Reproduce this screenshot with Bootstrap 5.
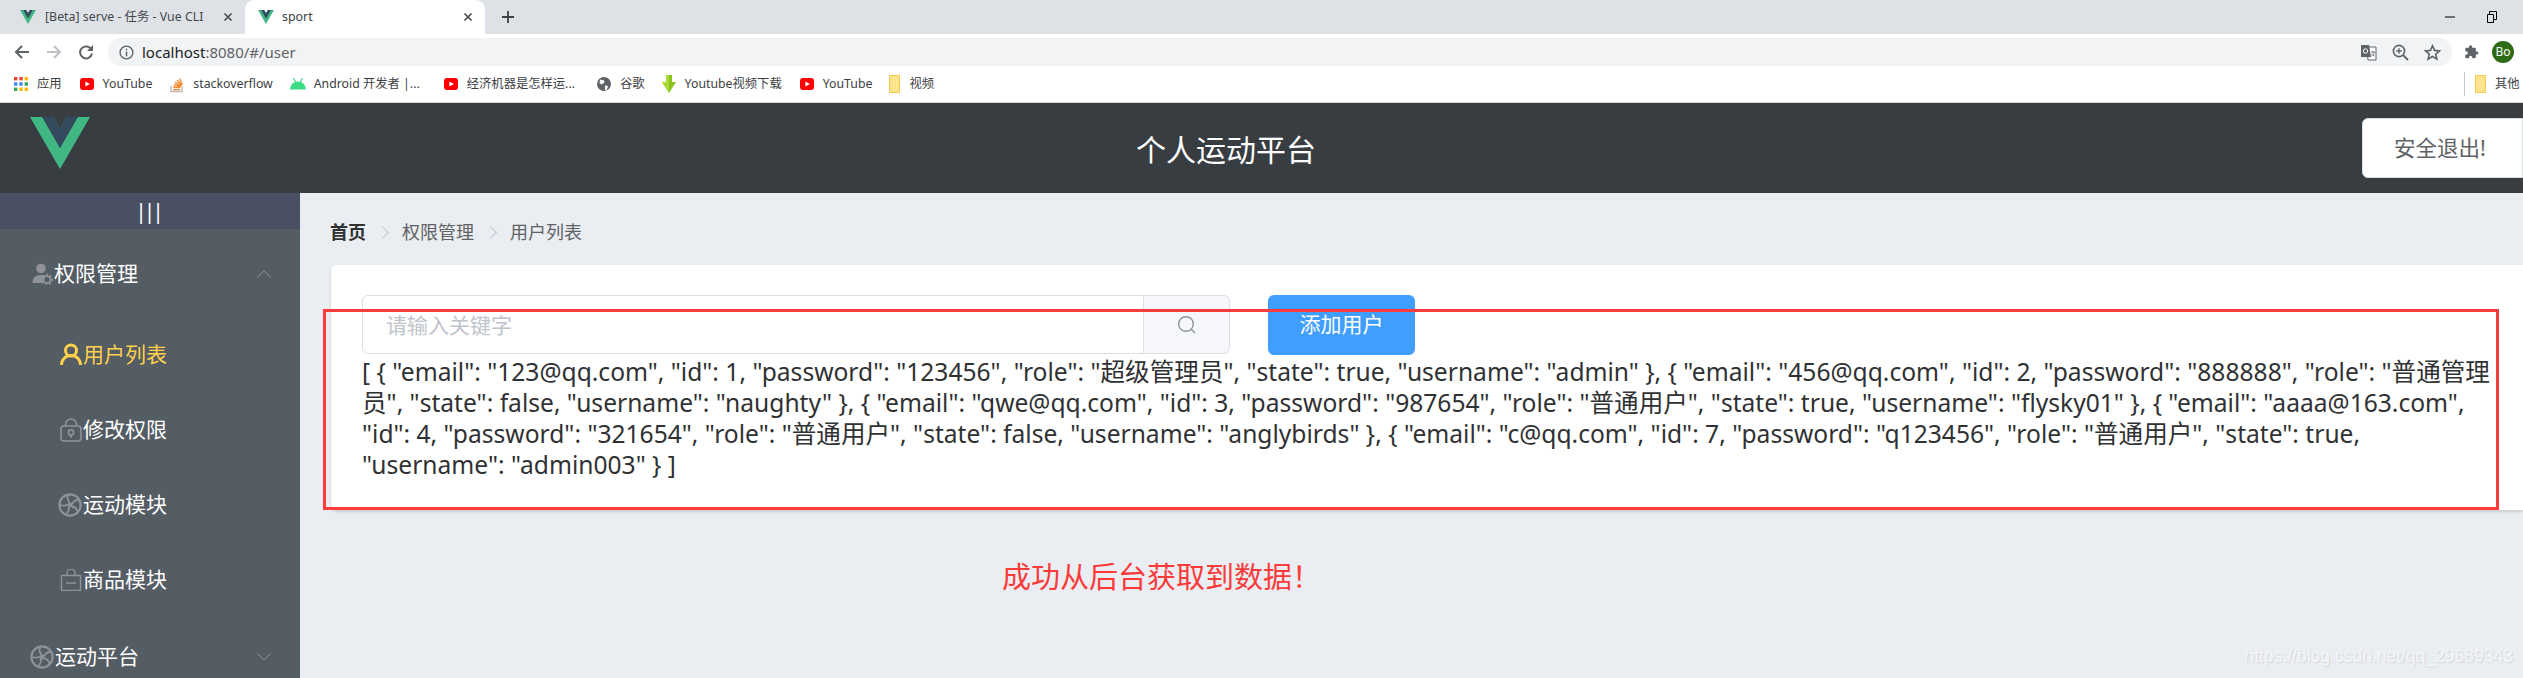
<!doctype html>
<html lang="zh">
<head>
<meta charset="utf-8">
<title>sport</title>
<link href="https://cdn.jsdelivr.net/npm/bootstrap@5.3.0/dist/css/bootstrap.min.css" rel="stylesheet">
<style>
html,body{height:678px;overflow:hidden}
body{font-family:"Noto Sans","Noto Sans CJK SC",sans-serif;background:#eaedf1;color:#303133;width:2523px}
svg{display:block;flex:none}
/* browser chrome */
.tabstrip{height:34px;background:#dee1e6;padding-left:16px}
.brtab{height:34px;font-size:12.4px;color:#45494e;white-space:nowrap}
.brtab.first{width:229px;padding-left:4px}
.brtab.active{width:240px;background:#fff;border-radius:9px 9px 0 0;padding-left:13px;color:#3c4043}
.tabname{flex:1;margin-left:8px;overflow:hidden}
.first .tabname{margin-left:9px}
.tabx{width:12px;margin-right:11px}
.newtab{margin-left:16px}
.winbtns{margin-left:auto;gap:32px;padding-right:26px}
.toolbar{height:32px;background:#fff;padding:4px 8px 0 14px}
.navs{gap:16px;width:94px}
.omni{height:28px;width:2344px;background:#f1f3f4;border-radius:14px;font-size:15px;color:#5f6368;padding:0 11px}
.omni b{font-weight:400;color:#202124}
.omni .urltxt{margin-left:8px}
.omni .rt{margin-left:auto;gap:15px}
.tool-r{margin-left:12px;gap:13px}
.avatar{width:22px;height:22px;border-radius:50%;background:#2e6b16;color:#fff;font-size:12px;line-height:22px;text-align:center}
.bmbar{height:37px;background:#fff;border-bottom:1px solid #d9dadc;padding:0 0 0 13px;font-size:12.3px;color:#3c4043;white-space:nowrap}
.bm{gap:8px;margin-right:17px}
.bm.w1{margin-right:23px}
.bm.w2{margin-right:21px}
.bm.tight{margin-right:16px}
.bm.other{margin-left:auto;margin-right:0;width:59px;border-left:1px solid #c9cbce;padding-left:10px;height:24px}
/* app */
.apphead{height:90px;background:#373d41}
.applogo{margin-left:30px;margin-top:14px}
.apptitle{flex:1;text-align:center;line-height:94px;font-size:30px;color:#fff}
.logout{margin-top:15px;height:60px;width:161px;background:#fff;border:1px solid #dcdfe6;border-radius:6px 0 0 6px;color:#606266;font-size:21.5px;padding:0 0 0 31px;text-align:left}
.appbody{height:485px}
.side{width:300px;background:#545c64;flex:none}
.sidebar-toggle{height:36px;background:#4a5064;color:#fff;font-size:21px;text-align:center;letter-spacing:-3px;line-height:36px;padding-right:4px}
.menuitem{height:75px;color:#fff;font-size:21px;padding-left:32px}
.menuitem.sub{padding-left:60px}
.menuitem.on{color:#ffd04b}
.menuitem svg.ic{margin-right:1px}
.menuitem svg.wheel{margin-left:-2px}
.chev{margin-left:auto;margin-right:29px}
.menulist{padding-top:7px}
.subs{padding-top:6px;padding-bottom:2px}
.content{flex:1;padding-left:31px;min-width:0}
.crumbs{height:72px;margin:0;font-size:18px;padding:5px 0 0;--bs-breadcrumb-margin-bottom:0;color:#606266}
.crumbs .breadcrumb-item{line-height:69px}
.crumbs .homecrumb{font-weight:700;color:#303133;margin-left:-1px}
.crumbs .breadcrumb-item+.breadcrumb-item{padding-left:36px;position:relative}
.crumbs .breadcrumb-item+.breadcrumb-item::before{content:"";position:absolute;left:12px;top:30px;width:9px;height:9px;border-top:1px solid #c0c4cc;border-right:1px solid #c0c4cc;transform:rotate(45deg);padding:0}
.panel{position:relative;background:#fff;border:0;border-radius:6px 0 0 6px;box-shadow:0 2px 3px rgba(0,0,0,.14);padding:30px 0 30px 31px}
.searchrow{height:60px;gap:38px}
.searchbox{width:868px;height:59px}
.searchbox .form-control{height:59px;font-size:21px;color:#606266;border:1px solid #dcdfe6;padding-left:23px;border-radius:6px 0 0 6px;background:#fff}
.searchbox .form-control::placeholder{color:#c0c4cc}
.searchbox .input-group-text{width:87px;justify-content:center;background:#f5f7fa;border:1px solid #dcdfe6;border-radius:0 6px 6px 0;padding:0}
.addbtn{width:147px;height:60px;background:#409eff;border:0;border-radius:6px;color:#fff;font-size:21px;padding:0}
.jsondump{margin:1px 0 0;font-size:24.6px;line-height:31px;white-space:nowrap;color:#303133}
.redbox{position:absolute;left:-8px;top:44px;width:2176px;height:201px;border:3px solid #ff3b3b;pointer-events:none}
.note{margin:47px 0 0 671px;color:#fb3a3a;font-size:29px;line-height:40px}
.wmark{position:absolute;right:10px;bottom:9px;color:#f5f6f8;font-size:17.5px;text-shadow:1px 1px 1px #d3d6dc;font-family:"Liberation Sans",sans-serif}
</style>
</head>
<body class="position-relative">

<div class="tabstrip d-flex align-items-center">
  <div class="brtab first d-flex align-items-center">
    <svg width="16" height="16" viewBox="0 0 261.76 226.69"><path fill="#41b883" d="M161.096.001l-30.225 52.351L100.647.001H-.005l130.877 226.688L261.749.001z"/><path fill="#34495e" d="M161.096.001l-30.225 52.351L100.647.001H52.346l78.526 136.01L209.398.001z"/></svg>
    <span class="tabname">[Beta] serve - 任务 - Vue CLI</span>
    <svg class="tabx" width="12" height="12" viewBox="0 0 12 12"><path d="M2.500 2.500l7 7m0-7l-7 7" stroke="#45494e" stroke-width="1.600"/></svg>
  </div>
  <div class="brtab active d-flex align-items-center">
    <svg width="16" height="16" viewBox="0 0 261.76 226.69"><path fill="#41b883" d="M161.096.001l-30.225 52.351L100.647.001H-.005l130.877 226.688L261.749.001z"/><path fill="#34495e" d="M161.096.001l-30.225 52.351L100.647.001H52.346l78.526 136.01L209.398.001z"/></svg>
    <span class="tabname">sport</span>
    <svg class="tabx" width="12" height="12" viewBox="0 0 12 12"><path d="M2.500 2.500l7 7m0-7l-7 7" stroke="#45494e" stroke-width="1.600"/></svg>
  </div>
  <svg class="newtab" width="14" height="14" viewBox="0 0 14 14"><path d="M7 1v12M1 7h12" stroke="#3c4043" stroke-width="1.800"/></svg>
  <div class="winbtns d-flex align-items-center">
    <svg width="10" height="10" viewBox="0 0 10 10"><path d="M0 5h10" stroke="#000"/></svg>
    <svg width="10" height="12" viewBox="0 0 10 12"><path d="M.5 3.500h6v8h-6zM2.500 3.500v-3h7v8h-3" fill="none" stroke="#000"/></svg>
  </div>
</div>

<div class="toolbar d-flex align-items-start">
  <div class="navs d-flex align-items-center h-100">
    <svg width="16" height="16" viewBox="0 0 16 16"><path d="M15 8H2M8 2L2 8l6 6" fill="none" stroke="#5f6368" stroke-width="2"/></svg>
    <svg width="16" height="16" viewBox="0 0 16 16"><path d="M1 8h13M8 2l6 6-6 6" fill="none" stroke="#bdc1c6" stroke-width="2"/></svg>
    <svg width="16" height="16" viewBox="0 0 16 16"><path d="M13.600 6A6 6 0 1 0 14 9.500" fill="none" stroke="#5f6368" stroke-width="2"/><path d="M15 1v6H9z" fill="#5f6368"/></svg>
  </div>
  <div class="omni d-flex align-items-center">
    <svg width="15" height="15" viewBox="0 0 15 15"><circle cx="7.500" cy="7.500" r="6.400" fill="none" stroke="#5f6368" stroke-width="1.400"/><path d="M7.500 6.600v4.600M7.500 3.800v1.500" stroke="#5f6368" stroke-width="1.500"/></svg>
    <span class="urltxt"><b>localhost</b>:8080/#/user</span>
    <div class="rt d-flex align-items-center">
      <svg width="17" height="17" viewBox="0 0 17 17"><path d="M7 3h9v13H8z" fill="#fff" stroke="#5f6368"/><path d="M1 1h8l2 12H1z" fill="#5f6368"/><path d="M11 8h4M13 7v1M14.500 8c-.5 2-2 3.500-3 4M11.600 9.500c.7 1.200 1.800 2.200 3 2.600" fill="none" stroke="#5f6368" stroke-width=".8"/><circle cx="5.500" cy="7" r="2.200" fill="none" stroke="#fff"/></svg>
      <svg width="17" height="17" viewBox="0 0 17 17"><circle cx="7" cy="7" r="5.600" fill="none" stroke="#5f6368" stroke-width="1.600"/><path d="M11 11l5 5" stroke="#5f6368" stroke-width="1.800"/><path d="M7 4.200v5.600M4.200 7h5.600" stroke="#5f6368" stroke-width="1.400"/></svg>
      <svg width="17" height="17" viewBox="0 0 17 17"><path d="M8.500 1.800l2 4.600 5 .5-3.800 3.300 1.200 4.900-4.400-2.600-4.400 2.600 1.200-4.900L1.500 6.900l5-.5z" fill="none" stroke="#5f6368" stroke-width="1.600"/></svg>
    </div>
  </div>
  <div class="tool-r d-flex align-items-center h-100">
    <svg width="15" height="16" viewBox="0 0 24 24"><path fill="#5f6368" d="M20.500 11H19V7a2 2 0 0 0-2-2h-4V3.500a2.500 2.500 0 0 0-5 0V5H4a2 2 0 0 0-2 2v3.800h1.500a2.700 2.700 0 0 1 0 5.400H2V20a2 2 0 0 0 2 2h3.800v-1.500a2.700 2.700 0 0 1 5.400 0V22H17a2 2 0 0 0 2-2v-4h1.500a2.500 2.500 0 0 0 0-5z"/></svg>
    <div class="avatar">Bo</div>
  </div>
</div>

<div class="bmbar d-flex align-items-center">
  <div class="bm d-flex align-items-center">
    <svg width="16" height="16" viewBox="0 0 16 16"><rect x="1" y="1" width="3.400" height="3.400" fill="#ea4335"/><rect x="6.300" y="1" width="3.400" height="3.400" fill="#ea4335"/><rect x="11.600" y="1" width="3.400" height="3.400" fill="#fbbc04"/><rect x="1" y="6.300" width="3.400" height="3.400" fill="#4285f4"/><rect x="6.300" y="6.300" width="3.400" height="3.400" fill="#4285f4"/><rect x="11.600" y="6.300" width="3.400" height="3.400" fill="#34a853"/><rect x="1" y="11.600" width="3.400" height="3.400" fill="#34a853"/><rect x="6.300" y="11.600" width="3.400" height="3.400" fill="#fbbc04"/><rect x="11.600" y="11.600" width="3.400" height="3.400" fill="#fbbc04"/></svg>
    <span>应用</span>
  </div>
  <div class="bm d-flex align-items-center">
    <svg width="16" height="16" viewBox="0 0 16 16"><rect x="1" y="2" width="14" height="12" rx="3" fill="#f00"/><path d="M6.300 5.400v5.200L11 8z" fill="#fff"/></svg>
    <span>YouTube</span>
  </div>
  <div class="bm d-flex align-items-center">
    <svg width="16" height="18" viewBox="0 0 16 18"><path d="M2 11v5.500h11V11" fill="none" stroke="#bcbbbb" stroke-width="1.400"/><path d="M4 14.600h7M4.200 12l7 .6M4.800 9.700l6.800 1.800M6 7.400l6 3.400M8 5.200l4.800 5M10.500 3.400l2.800 6.200" stroke="#f48024" stroke-width="1.300" fill="none"/></svg>
    <span>stackoverflow</span>
  </div>
  <div class="bm w1 d-flex align-items-center">
    <svg width="16" height="14" viewBox="0 0 16 14"><path d="M0 12.500a8 8 0 0 1 16 0z" fill="#3ddc84"/><path d="M3.500 1l2 4M12.500 1l-2 4" stroke="#3ddc84" stroke-width="1.200"/></svg>
    <span>Android 开发者 |...</span>
  </div>
  <div class="bm w2 d-flex align-items-center">
    <svg width="16" height="16" viewBox="0 0 16 16"><rect x="1" y="2" width="14" height="12" rx="3" fill="#f00"/><path d="M6.300 5.400v5.200L11 8z" fill="#fff"/></svg>
    <span>经济机器是怎样运...</span>
  </div>
  <div class="bm tight d-flex align-items-center">
    <svg width="16" height="16" viewBox="0 0 16 16"><circle cx="8" cy="8" r="7" fill="#5f6368"/><path d="M4 3.500l4 1 .5 2-3 2-2-1.500zM9 9.500l3 .5-1 3.500-2 1z" fill="#fff"/></svg>
    <span>谷歌</span>
  </div>
  <div class="bm d-flex align-items-center">
    <svg width="16" height="20" viewBox="0 0 16 20"><path d="M5 1h6v7h4l-7 11L1 8h4z" fill="#8bc31e"/><path d="M5 1h3v18L1 8h4z" fill="#a8d936"/></svg>
    <span>Youtube视频下载</span>
  </div>
  <div class="bm d-flex align-items-center">
    <svg width="16" height="16" viewBox="0 0 16 16"><rect x="1" y="2" width="14" height="12" rx="3" fill="#f00"/><path d="M6.300 5.400v5.200L11 8z" fill="#fff"/></svg>
    <span>YouTube</span>
  </div>
  <div class="bm d-flex align-items-center">
    <svg width="12" height="18" viewBox="0 0 12 18"><path d="M.5.5h10v17H.5z" fill="#fee48f" stroke="#f2c94c"/></svg>
    <span>视频</span>
  </div>
  <div class="bm other d-flex align-items-center">
    <svg width="12" height="18" viewBox="0 0 12 18"><path d="M.5.5h10v17H.5z" fill="#fee48f" stroke="#f2c94c"/></svg>
    <span>其他</span>
  </div>
</div>

<header class="apphead d-flex">
  <svg class="applogo" width="60" height="52" viewBox="0 0 261.76 226.69"><path fill="#41b883" d="M161.096.001l-30.225 52.351L100.647.001H-.005l130.877 226.688L261.749.001z"/><path fill="#34495e" d="M161.096.001l-30.225 52.351L100.647.001H52.346l78.526 136.01L209.398.001z"/></svg>
  <div class="apptitle">个人运动平台</div>
  <button class="logout btn" type="button">安全退出!</button>
</header>

<div class="appbody d-flex">
  <aside class="side">
    <div class="sidebar-toggle">|||</div>
    <div class="menulist">
      <div class="menuitem d-flex align-items-center">
        <svg class="ic" width="21" height="22" viewBox="0 0 21 22"><circle cx="9" cy="5.500" r="4.800" fill="#909399"/><path d="M.5 20c0-5 3-8 8-8 2 0 3 .4 4 1l-2 3 1.500 4z" fill="#909399"/><circle cx="15" cy="16.500" r="3.600" fill="none" stroke="#909399" stroke-width="2"/><circle cx="15" cy="16.500" r="5.400" fill="none" stroke="#909399" stroke-width="1.200" stroke-dasharray="2 2"/></svg>
        <span>权限管理</span>
        <svg class="chev" width="14" height="8" viewBox="0 0 14 8"><path d="M.5 7.500L7 1l6.500 6.500" fill="none" stroke="#909399"/></svg>
      </div>
      <div class="subs">
        <div class="menuitem sub on d-flex align-items-center">
          <svg class="ic" width="22" height="23" viewBox="0 0 22 23"><circle cx="11" cy="7.500" r="5.500" fill="none" stroke="#ffd04b" stroke-width="3"/><path d="M1.500 22c0-5.500 4-9.500 9.500-9.500s9.500 4 9.500 9.500" fill="none" stroke="#ffd04b" stroke-width="3"/></svg>
          <span>用户列表</span>
        </div>
        <div class="menuitem sub d-flex align-items-center">
          <svg class="ic" width="22" height="24" viewBox="0 0 22 24"><rect x="1" y="8" width="20" height="15" rx="3" fill="none" stroke="#909399" stroke-width="1.600"/><path d="M5.500 8V6.500a5.500 5.500 0 0 1 11 0V8" fill="none" stroke="#909399" stroke-width="1.600"/><circle cx="11" cy="14.500" r="2.600" fill="none" stroke="#909399" stroke-width="1.600"/><path d="M11 17v3" stroke="#909399" stroke-width="1.600"/></svg>
          <span>修改权限</span>
        </div>
        <div class="menuitem sub d-flex align-items-center">
          <svg class="ic wheel" width="24" height="24" viewBox="0 0 24 24"><circle cx="12" cy="12" r="10.600" fill="none" stroke="#909399" stroke-width="2.200"/><circle cx="12" cy="12" r="2.400" fill="#909399"/><path d="M12 10C9.500 8 9 5 10 2M14 11.500c1-3 3.500-4.500 7-4.500M13.500 13.500c3 0 5 1.500 6 5M10.500 13.700c1 2.500 0 5-2 7.300M10 11.500c-2.500 1.500-5 1.500-8 .5" fill="none" stroke="#909399" stroke-width="1.800"/></svg>
          <span>运动模块</span>
        </div>
        <div class="menuitem sub d-flex align-items-center">
          <svg class="ic" width="22" height="22" viewBox="0 0 22 22"><path d="M1.500 6.500h19v15h-19z" fill="none" stroke="#909399" stroke-width="1.400"/><path d="M7 6.500V4a4 4 0 0 1 8 0v2.500M6 14h10" fill="none" stroke="#909399" stroke-width="1.400"/></svg>
          <span>商品模块</span>
        </div>
      </div>
      <div class="menuitem d-flex align-items-center">
        <svg class="ic wheel" width="24" height="24" viewBox="0 0 24 24"><circle cx="12" cy="12" r="10.600" fill="none" stroke="#909399" stroke-width="2.200"/><circle cx="12" cy="12" r="2.400" fill="#909399"/><path d="M12 10C9.500 8 9 5 10 2M14 11.500c1-3 3.500-4.500 7-4.500M13.500 13.500c3 0 5 1.500 6 5M10.500 13.700c1 2.500 0 5-2 7.300M10 11.500c-2.500 1.500-5 1.500-8 .5" fill="none" stroke="#909399" stroke-width="1.800"/></svg>
        <span>运动平台</span>
        <svg class="chev" width="14" height="8" viewBox="0 0 14 8"><path d="M.5.5L7 7 13.500.5" fill="none" stroke="#909399"/></svg>
      </div>
    </div>
  </aside>
  <main class="content">
    <nav aria-label="breadcrumb">
      <ol class="breadcrumb crumbs">
        <li class="breadcrumb-item homecrumb">首页</li>
        <li class="breadcrumb-item">权限管理</li>
        <li class="breadcrumb-item">用户列表</li>
      </ol>
    </nav>
    <section class="card panel">
      <div class="searchrow d-flex">
        <div class="input-group searchbox">
          <input class="form-control" type="text" placeholder="请输入关键字">
          <span class="input-group-text">
            <svg width="20" height="20" viewBox="0 0 20 20"><circle cx="9" cy="9" r="7.300" fill="none" stroke="#909399" stroke-width="1.400"/><path d="M14 14l4 4" stroke="#909399" stroke-width="1.400"/></svg>
          </span>
        </div>
        <button class="btn addbtn" type="button">添加用户</button>
      </div>
      <p class="jsondump">[ { "email": "123@qq.com", "id": 1, "password": "123456", "role": "超级管理员", "state": true, "username": "admin" }, { "email": "456@qq.com", "id": 2, "password": "888888", "role": "普通管理<br>员", "state": false, "username": "naughty" }, { "email": "qwe@qq.com", "id": 3, "password": "987654", "role": "普通用户", "state": true, "username": "flysky01" }, { "email": "aaaa@163.com",<br>"id": 4, "password": "321654", "role": "普通用户", "state": false, "username": "anglybirds" }, { "email": "c@qq.com", "id": 7, "password": "q123456", "role": "普通用户", "state": true,<br>"username": "admin003" } ]</p>
      <div class="redbox"></div>
    </section>
    <div class="note">成功从后台获取到数据！</div>
  </main>
</div>
<div class="wmark">https://blog.csdn.net/qq_29689343</div>

<script src="https://cdn.jsdelivr.net/npm/bootstrap@5.3.0/dist/js/bootstrap.bundle.min.js"></script>
</body>
</html>
